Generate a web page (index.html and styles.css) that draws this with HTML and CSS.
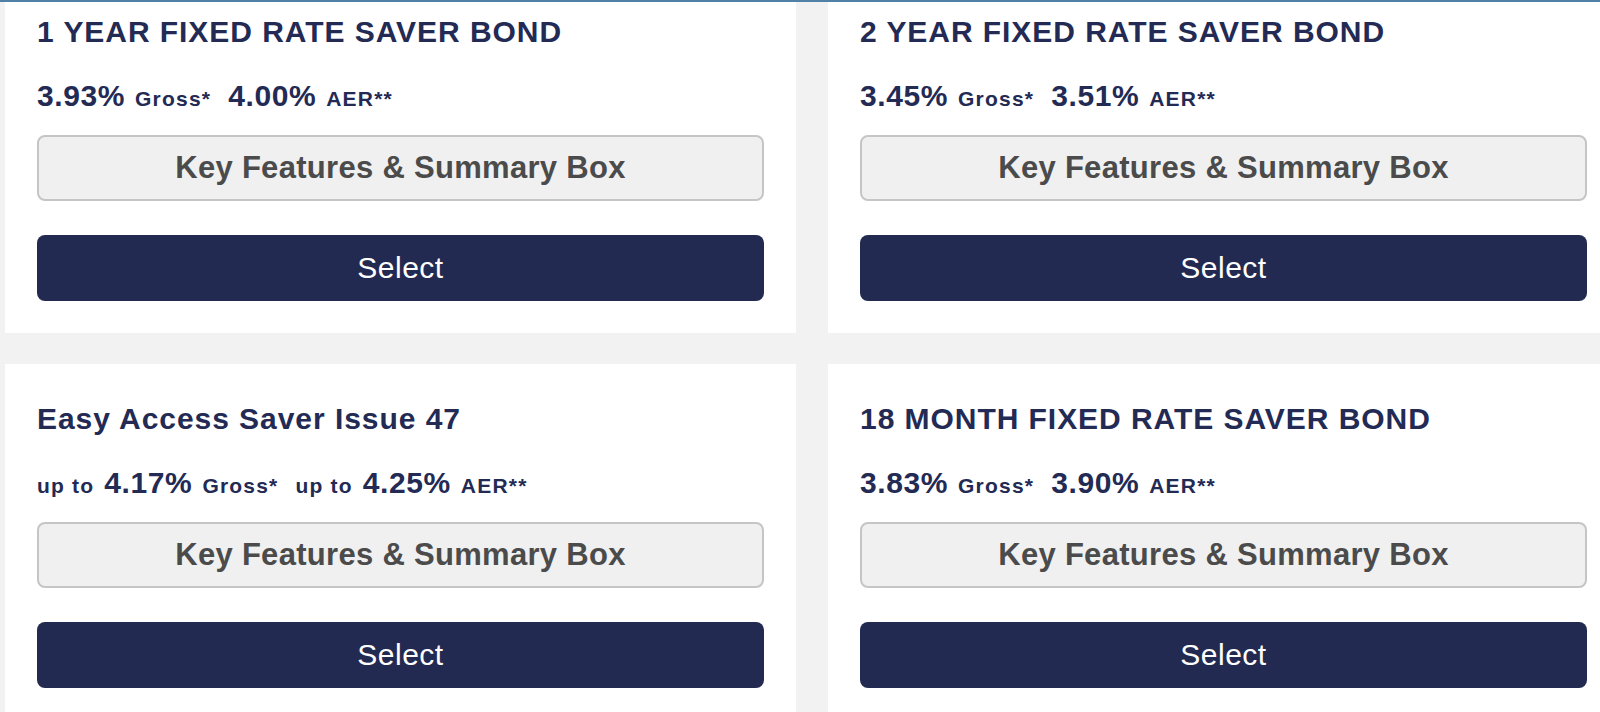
FILE: index.html
```html
<!DOCTYPE html>
<html lang="en">
<head>
  <meta charset="UTF-8">
  <title>Savings Accounts</title>
  <link rel="stylesheet" href="styles.css">
</head>
<body>
  <div class="header-rule"></div>

  <div class="products">
    <div class="product">
      <h2>1 YEAR FIXED RATE SAVER BOND</h2>
      <div class="rates">
        <span class="rate"><span class="value">3.93%</span><span class="label">Gross*</span></span>
        <span class="rate"><span class="value">4.00%</span><span class="label">AER**</span></span>
      </div>
      <button class="features-btn">Key Features &amp; Summary Box</button>
      <button class="select-btn">Select</button>
    </div>

    <div class="product">
      <h2>2 YEAR FIXED RATE SAVER BOND</h2>
      <div class="rates">
        <span class="rate"><span class="value">3.45%</span><span class="label">Gross*</span></span>
        <span class="rate"><span class="value">3.51%</span><span class="label">AER**</span></span>
      </div>
      <button class="features-btn">Key Features &amp; Summary Box</button>
      <button class="select-btn">Select</button>
    </div>

    <div class="product">
      <h2>Easy Access Saver Issue 47</h2>
      <div class="rates">
        <span class="rate"><span class="label">up to</span><span class="value">4.17%</span><span class="label">Gross*</span></span>
        <span class="rate"><span class="label">up to</span><span class="value">4.25%</span><span class="label">AER**</span></span>
      </div>
      <button class="features-btn">Key Features &amp; Summary Box</button>
      <button class="select-btn">Select</button>
    </div>

    <div class="product">
      <h2>18 MONTH FIXED RATE SAVER BOND</h2>
      <div class="rates">
        <span class="rate"><span class="value">3.83%</span><span class="label">Gross*</span></span>
        <span class="rate"><span class="value">3.90%</span><span class="label">AER**</span></span>
      </div>
      <button class="features-btn">Key Features &amp; Summary Box</button>
      <button class="select-btn">Select</button>
    </div>
  </div>
</body>
</html>
```

FILE: styles.css
```css
body {
  margin: 0;
  background-color: #f2f2f2;
  font-family: 'Liberation Sans', Arial, Helvetica, sans-serif;
  color: #232a54;
  overflow: hidden;
}

/* thin rule left by the fixed site header */
.header-rule {
  position: fixed;
  top: 0;
  left: 0;
  right: 0;
  height: 2px;
  background-color: #4f80a6;
  z-index: 10;
}

.products {
  display: grid;
  grid-template-columns: 791px 791px;
  column-gap: 32px;
  row-gap: 31px;
  margin-top: -23px;
  padding-left: 5px;
}

.product {
  display: flex;
  flex-direction: column;
  background-color: #ffffff;
  padding: 32px;
}

.product h2 {
  margin: 5px 0 0;
  font-size: 30px;
  line-height: 36px;
  font-weight: bold;
  letter-spacing: 0.95px;
}

.rates {
  display: flex;
  align-items: baseline;
  gap: 17px;
  height: 36px;
  margin-top: 28px;
}

.rate {
  display: flex;
  align-items: baseline;
  gap: 10px;
}

.value {
  font-size: 30px;
  line-height: 36px;
  font-weight: bold;
  letter-spacing: 0.6px;
}

.label {
  font-size: 21px;
  line-height: 24px;
  font-weight: bold;
  letter-spacing: 1.2px;
}

button {
  height: 66px;
  border-radius: 8px;
  font-family: inherit;
  cursor: pointer;
}

.features-btn {
  margin-top: 21px;
  background-color: #f0f0f0;
  border: 2px solid #c5c5c5;
  color: #4b4b4b;
  font-size: 31px;
  font-weight: bold;
  letter-spacing: 0.3px;
}

.select-btn {
  margin-top: 34px;
  background-color: #232a52;
  border: none;
  color: #ffffff;
  font-size: 30px;
  letter-spacing: 0.5px;
}
```
